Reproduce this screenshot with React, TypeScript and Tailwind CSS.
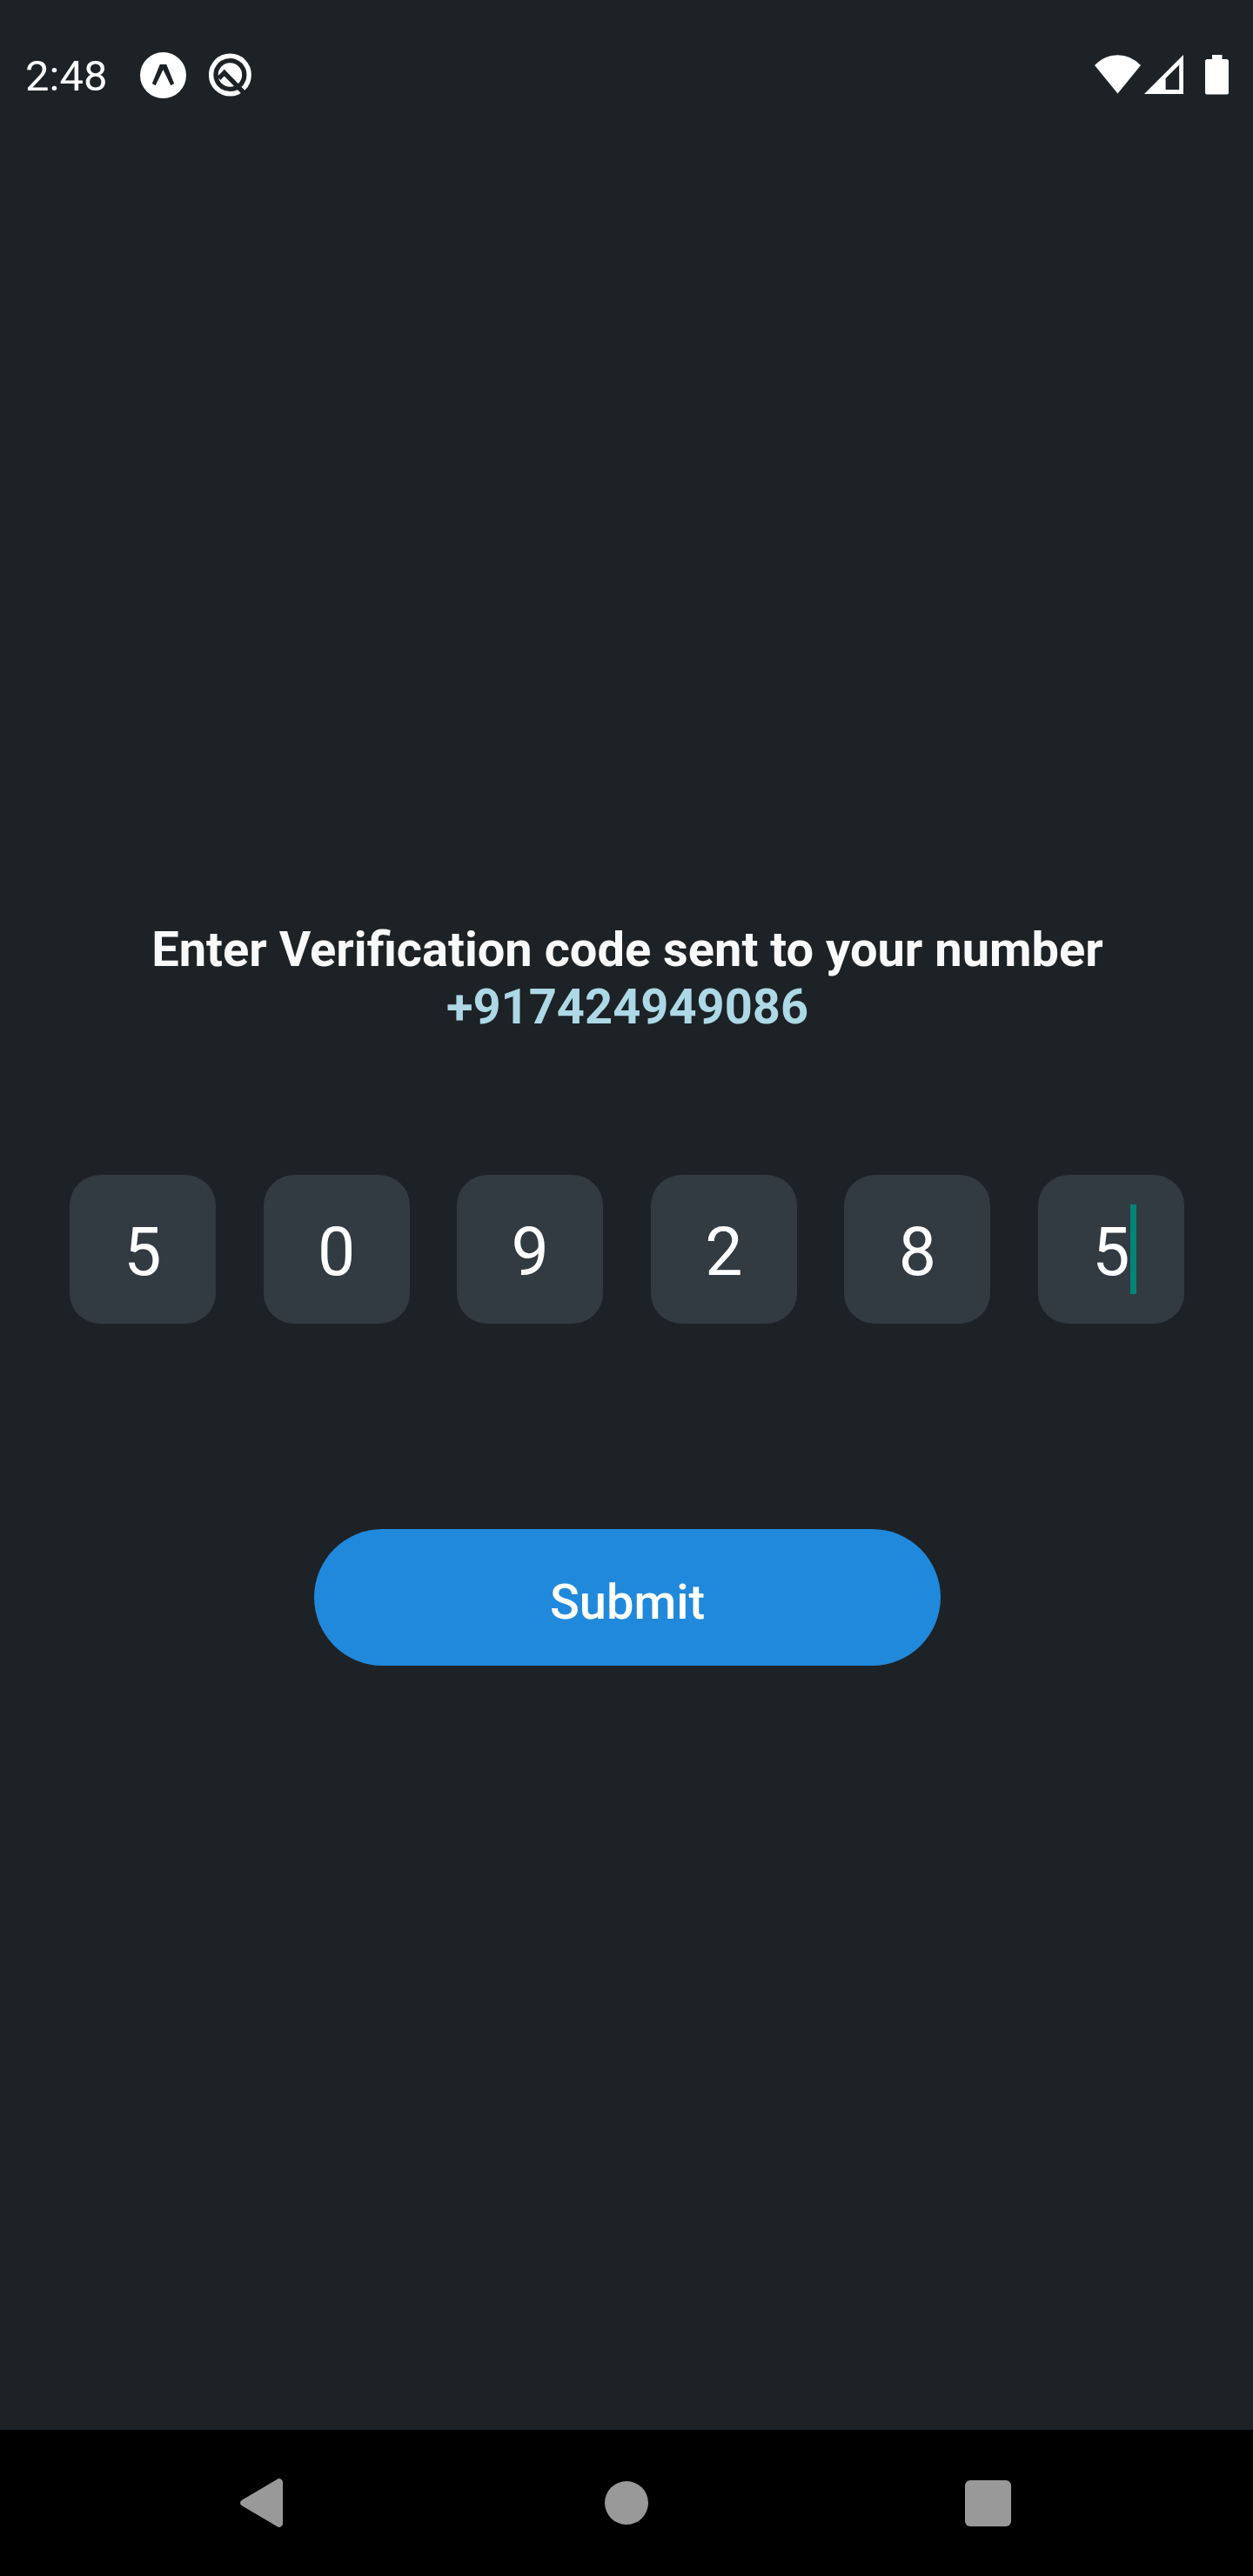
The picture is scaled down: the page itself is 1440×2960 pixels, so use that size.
const digits = ['5', '0', '9', '2', '8', '5'];

function StatusBar() {
  return (
    <header className="flex h-[168px] shrink-0 items-start justify-between pt-[57px] pr-7 pl-[29px]">
      <div className="flex items-start">
        <span className="w-[97px] pt-px text-[49px] leading-[60px] whitespace-nowrap">2:48</span>
        <svg className="mt-[3px] ml-[35px] h-[53px] w-[53px]" viewBox="0 0 53 53">
          <circle cx="26.5" cy="26.5" r="26.5" fill="#fff" />
          <path d="M22.8 14H30.3L39.2 36 35.3 38.2 26.5 20 17.7 38.2 13.8 36Z" fill="#1d2226" />
        </svg>
        <svg className="mt-[4px] ml-[26px] h-[50px] w-[50px]" viewBox="0 0 50 50">
          <circle cx="24.4" cy="25" r="24.5" fill="#fff" />
          <circle cx="24.4" cy="25" r="16.4" fill="#fff" stroke="#1d2226" strokeWidth="5.3" />
          <path d="M11.5 29 17.8 22.7 43 48.5" fill="none" stroke="#1d2226" strokeWidth="5.4" />
        </svg>
      </div>
      <div className="flex items-start pt-[6px]">
        <svg className="h-[45px] w-[53px]" viewBox="0 0 53 45">
          <path d="M0 12Q11.5 .2 26.5 .2T53 12L26.5 44.5Z" fill="#fff" />
        </svg>
        <svg className="ml-1 h-[45px] w-[45px]" viewBox="0 0 45 45">
          <path d="M45 0V45H0ZM40.2 11.5 24.6 27V40H40.2Z" fill="#fff" fillRule="evenodd" />
        </svg>
        <svg className="ml-[25px] h-[46px] w-[27px]" viewBox="0 0 27 46">
          <path
            d="M8 0H19.5V5H24.5Q27 5 27 7.5V43Q27 45.6 24.5 45.6H2.5Q0 45.6 0 43V7.5Q0 5 2.5 5H8Z"
            fill="#fff"
          />
        </svg>
      </div>
    </header>
  );
}

function NavigationBar() {
  return (
    <nav className="flex h-[168px] shrink-0 items-center justify-between bg-black pr-[278px] pl-[276px]">
      <svg className="h-14 w-[49px]" viewBox="0 0 49 56">
        <path
          d="M2 24.8 42.8.8Q45 -.6 47 .8Q49 2 49 4.5V51.5Q49 54 47 55.2Q45 56.6 42.8 55.2L2 31.2Q0 30 0 28T2 24.8Z"
          fill="#999"
        />
      </svg>
      <div className="ml-[6px] h-[50px] w-[50px] rounded-full bg-[#999]" />
      <div className="h-[53px] w-[53px] rounded-[6px] bg-[#999]" />
    </nav>
  );
}

export default function App() {
  return (
    <div className="flex h-[2960px] w-[1440px] flex-col overflow-hidden bg-[#1d2226] font-['Roboto',sans-serif] text-white">
      <StatusBar />
      <main className="flex flex-1 flex-col items-center pt-[890px]">
        <h1 className="ml-[2px] text-center text-[56px] leading-[66px] font-bold whitespace-nowrap text-[#f9f9f9]">
          Enter Verification code sent to your number
          <span className="block text-[#add8e6]">+917424949086</span>
        </h1>
        <div className="mt-[160px] ml-px flex w-[1281px] justify-between">
          {digits.map((digit, index) => (
            <div
              key={index}
              className="flex h-[171px] w-[168px] items-center justify-center rounded-[35px] bg-[#323a42] text-[77px] leading-[103px]"
            >
              <span className="relative mt-[8px]">
                {digit}
                {index === digits.length - 1 && (
                  <span className="absolute top-[-4px] left-full h-[103px] w-[7px] bg-[#008577]" />
                )}
              </span>
            </div>
          ))}
        </div>
        <button className="mt-[236px] ml-[2px] flex h-[157px] w-[720px] items-center justify-center rounded-full bg-[#2089dc] pt-[10px] text-[56px] leading-[66px] font-medium">
          Submit
        </button>
      </main>
      <NavigationBar />
    </div>
  );
}
